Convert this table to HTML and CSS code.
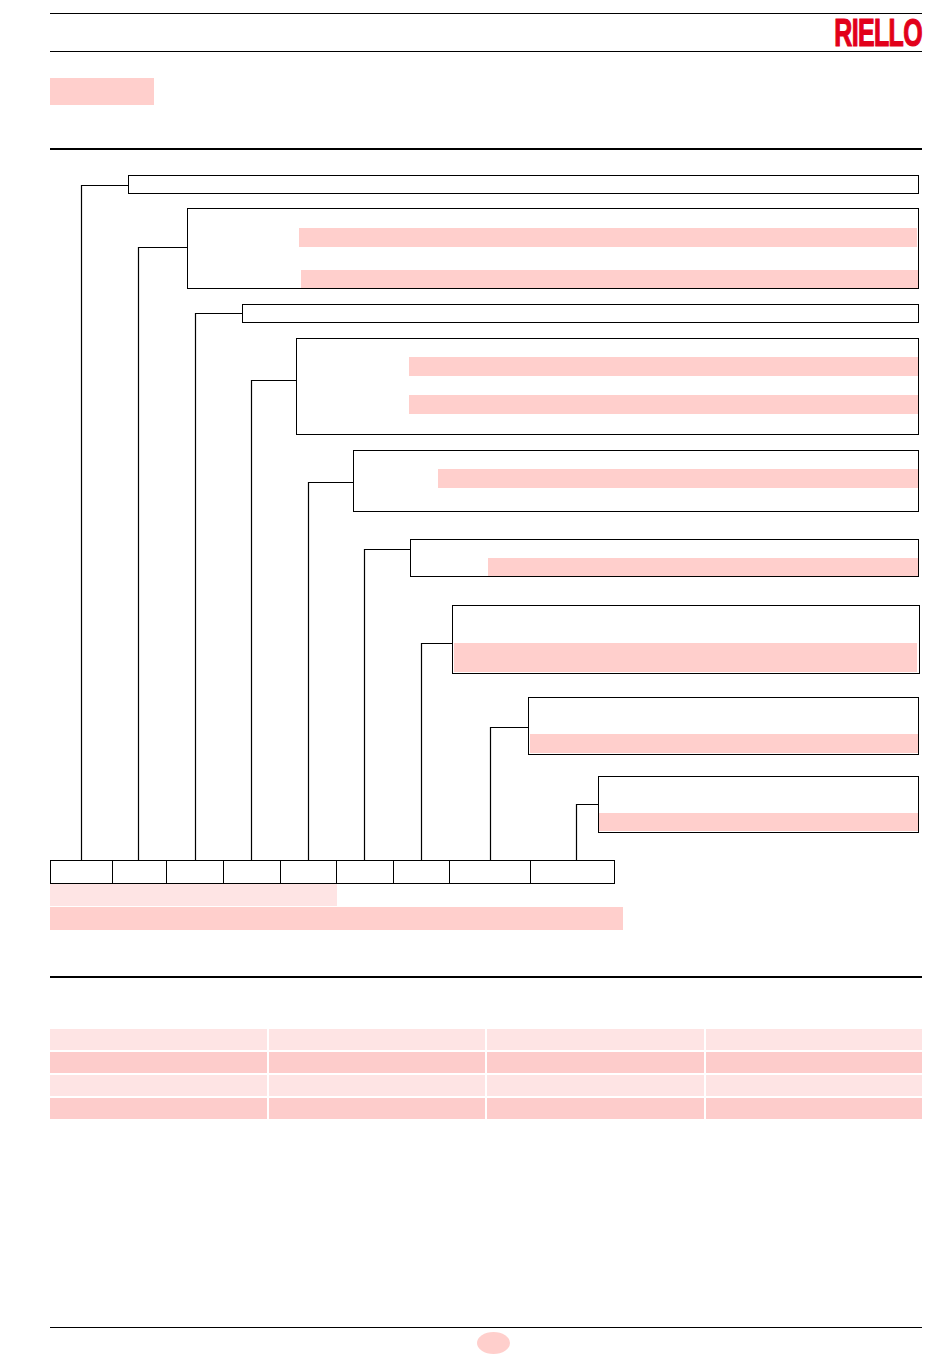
FILE: index.html
```html
<!DOCTYPE html>
<html lang="it">
<head>
<meta charset="utf-8">
<title>Designazione bruciatore</title>
<link rel="stylesheet" href="styles.css">
</head>
<body>
<div class="page">
  <header class="header">
    <span class="logo">RIELLO</span>
  </header>

  <div class="title-block"></div>
  <div class="rule-thick rule-top"></div>

  <section class="diagram">
    <svg class="connectors" width="872" height="710" viewBox="0 0 872 710">
      <path d="M31.5 710 V35.5 H78" />
      <path d="M88.5 710 V97.5 H137" />
      <path d="M145.5 710 V163.5 H192" />
      <path d="M201.5 710 V230.5 H246" />
      <path d="M258.5 710 V332.5 H303" />
      <path d="M314.5 710 V399.5 H360" />
      <path d="M371.5 710 V493.5 H402" />
      <path d="M440.5 710 V577.5 H478" />
      <path d="M526.5 710 V654.5 H548" />
    </svg>

    <div class="node n1"></div>
    <div class="node n2">
      <span class="bar b2a"></span>
      <span class="bar b2b"></span>
    </div>
    <div class="node n3"></div>
    <div class="node n4">
      <span class="bar b4a"></span>
      <span class="bar b4b"></span>
    </div>
    <div class="node n5"><span class="bar b5"></span></div>
    <div class="node n6"><span class="bar b6"></span></div>
    <div class="node n7"><span class="bar b7"></span></div>
    <div class="node n8"><span class="bar b8"></span></div>
    <div class="node n9"><span class="bar b9"></span></div>
  </section>

  <div class="code-row">
    <div class="cell c1"></div>
    <div class="cell c2"></div>
    <div class="cell c3"></div>
    <div class="cell c3"></div>
    <div class="cell c5"></div>
    <div class="cell c3"></div>
    <div class="cell c5"></div>
    <div class="cell c8"></div>
    <div class="cell c9"></div>
  </div>
  <div class="note note-light"></div>
  <div class="note note-dark"></div>

  <div class="rule-thick rule-mid"></div>

  <div class="table">
    <div class="td light"></div><div class="td light"></div><div class="td light"></div><div class="td light"></div>
    <div class="td dark"></div><div class="td dark"></div><div class="td dark"></div><div class="td dark"></div>
    <div class="td light"></div><div class="td light"></div><div class="td light"></div><div class="td light"></div>
    <div class="td dark"></div><div class="td dark"></div><div class="td dark"></div><div class="td dark"></div>
  </div>

  <footer class="footer">
    <div class="page-num"></div>
  </footer>
</div>
</body>
</html>
```

FILE: styles.css
```css
html, body {
  margin: 0;
  padding: 0;
  background: #ffffff;
}

body {
  font-family: "Liberation Sans", Arial, sans-serif;
  width: 950px;
  height: 1360px;
  overflow: hidden;
}

.page {
  width: 872px;
  padding-left: 50px;
}

/* Header */
.header {
  margin-top: 13px;
  height: 37px;
  border-top: 1px solid #000;
  border-bottom: 1px solid #000;
  display: flex;
  justify-content: flex-end;
  align-items: flex-start;
}

.logo {
  display: inline-block;
  font-family: "Liberation Sans", Arial, sans-serif;
  font-weight: bold;
  font-size: 39px;
  line-height: 37px;
  height: 37px;
  letter-spacing: -1px;
  color: #e2001a;
  -webkit-text-stroke: 1.2px #e2001a;
  transform: scaleX(0.64);
  transform-origin: right center;
}

.title-block {
  margin-top: 26px;
  width: 104px;
  height: 27px;
  background: #ffcfcc;
}

.rule-thick {
  height: 2px;
  background: #000;
}

.rule-top {
  margin-top: 43px;
}

/* Diagram */
.diagram {
  position: relative;
  height: 710px;
}

.connectors {
  position: absolute;
  left: 0;
  top: 0;
}

.connectors path {
  fill: none;
  stroke: #000;
  stroke-width: 1.2;
}

.node {
  position: absolute;
  box-sizing: border-box;
  border: 1px solid #000;
  background: #fff;
}

.n1 { left: 78px;  top: 25px;  width: 791px; height: 19px; }
.n2 { left: 137px; top: 58px;  width: 732px; height: 81px; }
.n3 { left: 192px; top: 154px; width: 677px; height: 19px; }
.n4 { left: 246px; top: 188px; width: 623px; height: 97px; }
.n5 { left: 303px; top: 300px; width: 566px; height: 62px; }
.n6 { left: 360px; top: 389px; width: 509px; height: 38px; }
.n7 { left: 402px; top: 455px; width: 468px; height: 69px; }
.n8 { left: 478px; top: 547px; width: 391px; height: 58px; }
.n9 { left: 548px; top: 626px; width: 321px; height: 57px; }

.bar {
  position: absolute;
  display: block;
  background: #ffcfcc;
}

.b2a { left: 111px; top: 19px; width: 618px; height: 19px; }
.b2b { left: 113px; top: 61px; width: 617px; height: 18px; }
.b4a { left: 112px; top: 18px; width: 509px; height: 19px; }
.b4b { left: 112px; top: 56px; width: 509px; height: 19px; }
.b5  { left: 84px;  top: 18px; width: 480px; height: 19px; }
.b6  { left: 77px;  top: 18px; width: 430px; height: 18px; }
.b7  { left: 1px;   top: 37px; width: 463px; height: 29px; }
.b8  { left: 1px;   top: 36px; width: 388px; height: 19px; }
.b9  { left: 0;     top: 36px; width: 319px; height: 18px; }

/* Code row */
.code-row {
  display: flex;
  width: 565px;
  height: 24px;
  box-sizing: border-box;
  border-top: 1px solid #000;
  border-bottom: 1px solid #000;
}

.cell {
  box-sizing: border-box;
  border-left: 1px solid #000;
  height: 100%;
}

.c1 { width: 62px; }
.c2 { width: 54px; }
.c3 { width: 57px; }
.c5 { width: 56px; }
.c8 { width: 81px; }
.c9 { width: 85px; border-right: 1px solid #000; }

.note {
  height: 22px;
}

.note-light {
  width: 287px;
  background: #fee4e4;
}

.note-dark {
  margin-top: 1px;
  width: 573px;
  height: 23px;
  background: #ffcfcc;
}

.rule-mid {
  margin-top: 46px;
}

/* Table */
.table {
  margin-top: 51px;
  display: grid;
  grid-template-columns: repeat(4, 1fr);
  grid-auto-rows: 21px;
  column-gap: 2px;
  row-gap: 2px;
}

.td.light { background: #fee4e4; }
.td.dark { background: #fdcccb; }

/* Footer */
.footer {
  margin-top: 208px;
  border-top: 1px solid #000;
}

.page-num {
  margin-top: 4px;
  margin-left: 427px;
  width: 33px;
  height: 22px;
  border-radius: 50%;
  background: #ffcfcc;
}
```
